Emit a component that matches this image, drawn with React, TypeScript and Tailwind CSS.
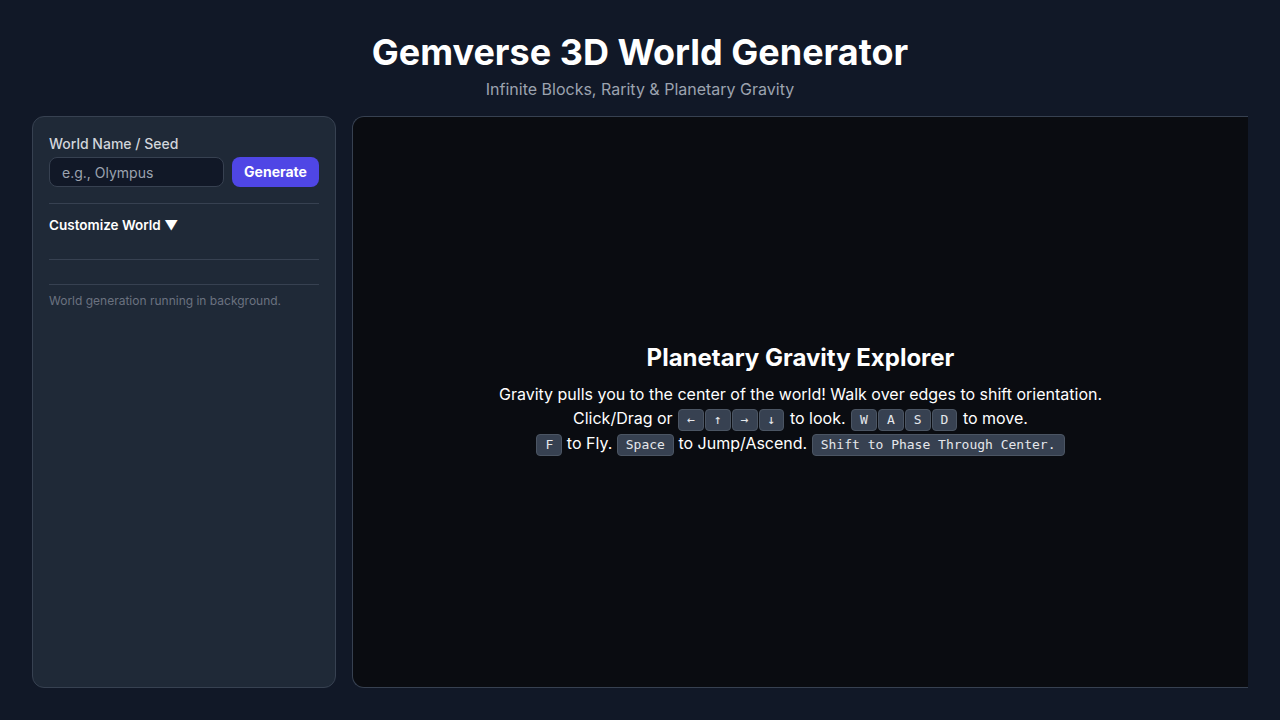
import React from 'react';

const Kbd = ({ children }: { children: React.ReactNode }) => (
  <kbd className="inline-block rounded border border-[#4b5563] bg-[#374151] px-2 py-[2px] align-middle font-['DejaVu_Sans_Mono',monospace] text-[13px] leading-4 text-gray-200">
    {children}
  </kbd>
);

const App = () => {
  return (
    <div className="min-h-screen w-full overflow-hidden bg-[#111827] font-['Inter',sans-serif] text-white">
      <header className="pt-[31px] text-center">
        <h1 className="text-[36px] font-bold leading-[42px]">Gemverse 3D World Generator</h1>
        <p className="mt-[4px] text-[16px] leading-[24px] text-[#9ca3af]">Infinite Blocks, Rarity &amp; Planetary Gravity</p>
      </header>

      <div className="mt-[15px] flex gap-4 px-8">
        <aside className="h-[572px] w-[304px] shrink-0 rounded-xl border border-[#374151] bg-[#1f2937] p-4">
          <label className="block pt-[1px] text-sm font-medium leading-5 text-[#d1d5db]">World Name / Seed</label>
          <div className="mt-[3px] flex gap-2">
            <input
              placeholder="e.g., Olympus"
              className="h-[30px] w-[175px] rounded-lg border border-[#374151] bg-[#111827] px-3 text-sm text-white placeholder:text-[#9ca3af] outline-none"
            />
            <button className="h-[30px] flex-1 rounded-lg bg-[#4f46e5] text-sm font-bold text-white">Generate</button>
          </div>
          <div className="mt-4 border-t border-[#374151] pt-[11px]">
            <div className="text-[13.5px] font-semibold leading-5 text-white">Customize World ▼</div>
          </div>
          <div className="mt-[24px] border-t border-[#374151]" />
          <div className="mt-[24px] border-t border-[#374151] pt-[8px]">
            <p className="text-xs leading-4 text-[#6b7280]">World generation running in background.</p>
          </div>
        </aside>

        <main className="flex h-[572px] flex-1 items-center justify-center rounded-l-xl border-y border-l border-[#374151] bg-[#0a0c11]">
          <div className="mb-[6px] text-center">
            <h2 className="text-2xl font-bold leading-8">Planetary Gravity Explorer</h2>
            <div className="mt-[8px] text-base leading-6 text-white">
              <p>Gravity pulls you to the center of the world! Walk over edges to shift orientation.</p>
              <p>
                Click/Drag or <span className="mx-px inline-flex gap-px align-middle"><Kbd>←</Kbd><Kbd>↑</Kbd><Kbd>→</Kbd><Kbd>↓</Kbd></span> to look.{' '}
                <span className="mx-px inline-flex gap-px align-middle"><Kbd>W</Kbd><Kbd>A</Kbd><Kbd>S</Kbd><Kbd>D</Kbd></span> to move.
              </p>
              <p>
                <Kbd>F</Kbd> to Fly. <Kbd>Space</Kbd> to Jump/Ascend. <Kbd>Shift to Phase Through Center.</Kbd>
              </p>
            </div>
          </div>
        </main>
      </div>
    </div>
  );
};

export default App;
